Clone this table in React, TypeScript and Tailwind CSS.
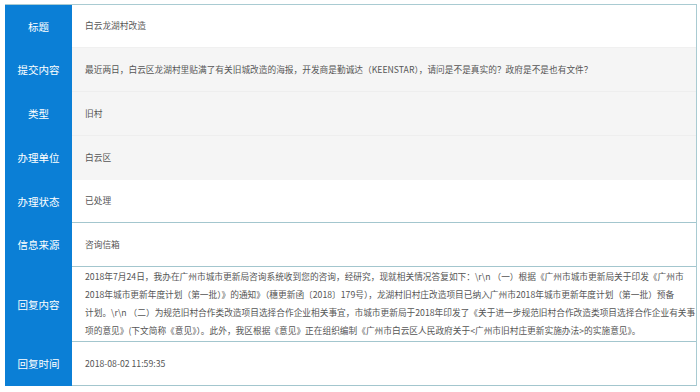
import React from "react";

const FONT = '"Microsoft YaHei", "Noto Sans CJK SC", "Noto Sans", sans-serif';

type Row = {
  label: string;
  h: string;
  bg: string;
  border: string;
  content: React.ReactNode;
};

const reply = [
  "2018年7月24日，我办在广州市城市更新局咨询系统收到您的咨询，经研究，现就相关情况答复如下：\\r\\n （一）根据《广州市城市更新局关于印发《广州市",
  "2018年城市更新年度计划（第一批）》的通知》（穗更新函〔2018〕179号），龙湖村旧村庄改造项目已纳入广州市2018年城市更新年度计划（第一批）预备",
  "计划。\\r\\n （二）为规范旧村合作类改造项目选择合作企业相关事宜，市城市更新局于2018年印发了《关于进一步规范旧村合作改造类项目选择合作企业有关事",
  "项的意见》(下文简称《意见》）。此外，我区根据《意见》正在组织编制《广州市白云区人民政府关于<广州市旧村庄更新实施办法>的实施意见》。",
];

const rows: Row[] = [
  { label: "标题", h: "h-[43px]", bg: "bg-white", border: "border-[#f0f0f0]", content: "白云龙湖村改造" },
  {
    label: "提交内容",
    h: "h-[44px]",
    bg: "bg-[#f5f5f5]",
    border: "border-[#eeeeee]",
    content: "最近两日，白云区龙湖村里贴满了有关旧城改造的海报，开发商是勤诚达（KEENSTAR），请问是不是真实的？政府是不是也有文件？",
  },
  { label: "类型", h: "h-[44px]", bg: "bg-[#f5f5f5]", border: "border-[#eeeeee]", content: "旧村" },
  { label: "办理单位", h: "h-[44px]", bg: "bg-[#f5f5f5]", border: "border-[#f5f5f5]", content: "白云区" },
  { label: "办理状态", h: "h-[43px]", bg: "bg-white", border: "border-[#a3c6ce]", content: "已处理" },
  { label: "信息来源", h: "h-[44px]", bg: "bg-white", border: "border-[#a3c6ce]", content: "咨询信箱" },
  {
    label: "回复内容",
    h: "h-[75px]",
    bg: "bg-white",
    border: "border-[#a3c6ce]",
    content: (
      <div className="flex flex-col">
        {reply.map((l, i) => (
          <div key={i} className="h-[18px] leading-[18px] whitespace-nowrap">
            {l}
          </div>
        ))}
      </div>
    ),
  },
  { label: "回复时间", h: "h-[44px]", bg: "bg-white", border: "border-[#a3c6ce]", content: "2018-08-02 11:59:35" },
];

export default function App() {
  return (
    <div className="w-[700px] h-[392px] bg-white overflow-hidden pt-[4px] pl-[5px]" style={{ fontFamily: FONT }}>
      <div className="w-[692px] border-t border-r border-[#a9cbd2] flex flex-col">
        {rows.map((r) => (
          <div key={r.label} className={`flex ${r.h}`}>
            <div className="w-[67px] shrink-0 bg-[#0b7fd6] flex items-center justify-center text-white text-[10.5px]">
              {r.label}
            </div>
            <div
              className={`flex-1 min-w-0 flex items-center pl-[13px] text-[#555555] text-[8.7px] border-b ${r.bg} ${r.border}`}
            >
              {r.content}
            </div>
          </div>
        ))}
      </div>
    </div>
  );
}
